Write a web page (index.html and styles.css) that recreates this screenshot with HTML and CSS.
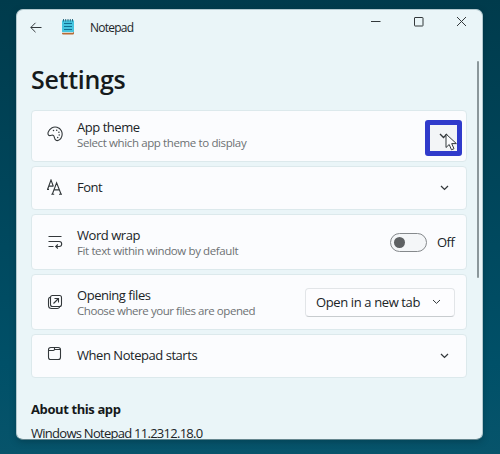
FILE: index.html
```html
<!DOCTYPE html>
<html lang="en">
<head>
<meta charset="utf-8">
<title>Notepad</title>
<link rel="stylesheet" href="styles.css">
</head>
<body>
<main class="window">
  <header class="titlebar">
    <svg class="back" width="12" height="12" viewBox="0 0 12 12"><path d="M11.500 5.500H.8M5.500.8.8 5.500l4.700 4.700"/></svg>
    <svg class="logo" width="12" height="16" viewBox="0 0 12 16">
      <rect x="0" y="13" width="12" height="2.400" rx=".8" fill="#b96b35"/>
      <rect x="0" y="1.300" width="12" height="12" rx=".8" fill="#45c4df"/>
      <path d="M0 13.500h11" stroke="#d8eef0" stroke-width=".8"/>
      <path d="M1.500 0v2.500M3.700 0v2.500M6 0v2.500M8.300 0v2.500M10.500 0v2.500" stroke="#176078" stroke-width=".9"/>
      <path d="M2 4.500h8M2 7.500h8M2 10.500h8" stroke="#116e92" stroke-width="1"/>
    </svg>
    <span class="app-name">Notepad</span>
    <div class="controls">
      <svg width="11" height="11" viewBox="0 0 11 11"><path d="M1 5.500h9.500"/></svg>
      <svg width="11" height="11" viewBox="0 0 11 11"><rect x="1.500" y="1.500" width="8.500" height="8.500" rx=".5"/></svg>
      <svg width="11" height="11" viewBox="0 0 11 11"><path d="m1 1 9 9M10 1l-9 9"/></svg>
    </div>
  </header>
  <section class="content">
    <h1>Settings</h1>
    <div class="cards">
      <div class="card theme">
        <svg class="icon" width="16" height="16" viewBox="0 0 16 16"><path d="M1.200 6.200C2.400 2.300 6.300.3 10 1.300c4 1.100 6 5 4.800 9-.8 2.800-3.200 4.800-5.300 4.200-1.800-.5-2-2.200-2.300-3.700-.3-1.400-1.100-1.900-2.300-1.600-1.100.3-2.300.8-3.200.1C.8 8.500.8 7.500 1.200 6.200Z"/><path class="dots" d="M6.500 4.500h.01M9.700 4.200h.01M11.900 6.300h.01M12.200 9h.01M10.700 11.500h.01"/></svg>
        <div class="text"><span class="name">App theme</span><span class="desc">Select which app theme to display</span></div>
        <div class="highlight"><svg width="9" height="6" viewBox="0 0 9 6"><path d="m1 1 3.500 3.400L8 1"/></svg></div>
        <svg class="cursor" width="13" height="19" viewBox="0 0 13 19"><path d="M1 1v13.500l3.200-3 2.300 5.300 2.500-1.100-2.300-5.100h4.700Z"/></svg>
      </div>
      <div class="card single">
        <svg class="icon" width="16" height="16" viewBox="0 0 16 16"><path d="M.6 10.300 4 1l2.400 6.500M1.800 7.100h4.100M0 10.400h2M5.400 15 9.600 3.700 14 15M7 10.900h5.300M4.300 15.200h2.900M12 15.200h3"/></svg>
        <div class="text"><span class="name">Font</span></div>
        <svg class="chevron" width="9" height="6" viewBox="0 0 9 6"><path d="m1 1 3.500 3.400L8 1"/></svg>
      </div>
      <div class="card">
        <svg class="icon wrap" width="16" height="16" viewBox="0 0 16 16"><path d="M1.500 2.500h13M1.500 7.500h10.700a2.500 2.500 0 0 1 0 5H9M1.500 12.500h5M10.900 10.500l-2.200 2 2.200 2"/></svg>
        <div class="text"><span class="name">Word wrap</span><span class="desc">Fit text within window by default</span></div>
        <div class="switch"></div><span class="off">Off</span>
      </div>
      <div class="card">
        <svg class="icon files" width="16" height="16" viewBox="0 0 16 16"><rect x="3.500" y="1.500" width="11" height="11" rx="2"/><path d="M3 3.200C2 3.700 1.500 4.300 1.500 5.300v5.900c0 2 1.100 3.300 3.200 3.300h5.500c1.200 0 2-.5 2.500-1.500M6.500 9.500l5-5M7.500 4.500h4v4"/></svg>
        <div class="text"><span class="name">Opening files</span><span class="desc choose">Choose where your files are opened</span></div>
        <div class="select"><span>Open in a new tab</span><svg width="9" height="6" viewBox="0 0 9 6"><path d="m1 1 3.500 3.400L8 1"/></svg></div>
      </div>
      <div class="card single">
        <svg class="icon start" width="16" height="16" viewBox="0 0 16 16"><rect x="1.500" y="1.500" width="12" height="12" rx="2.300"/><path d="M1.500 4.500h4.800q1.200 0 1.200-1.200V1.500M7.500 3.500h6"/></svg>
        <div class="text"><span class="name">When Notepad starts</span></div>
        <svg class="chevron" width="9" height="6" viewBox="0 0 9 6"><path d="m1 1 3.500 3.400L8 1"/></svg>
      </div>
    </div>
    <h2>About this app</h2>
    <p>Windows Notepad 11.2312.18.0</p>
  </section>
  <div class="scrollbar"></div>
</main>
</body>
</html>
```

FILE: styles.css
```css
* { box-sizing: border-box; }
body {
  margin: 0;
  width: 500px;
  height: 454px;
  padding: 9px 17px 14px 16px;
  overflow: hidden;
  background: linear-gradient(180deg, #003b4c 0%, #00455a 40%, #005068 80%, #07546b 100%);
  font-family: "Open Sans", "Noto Sans", sans-serif;
  color: #202427;
}
svg { fill: none; stroke: #33383b; stroke-width: 1; flex: none; display: block; }
span, h1, h2, p { white-space: nowrap; }
.window {
  position: relative;
  height: 431px;
  overflow: hidden;
  background: #eaf5f8;
  border: 1px solid #b2c8ce;
  border-bottom-color: #65868f;
  border-radius: 7px;
  box-shadow: 0 2px 6px #00283560;
}
.titlebar { height: 38px; display: flex; padding-left: 13px; }
.back { margin-top: 12px; }
.logo { margin: 9px 0 0 20px; stroke: none; }
.app-name { margin: 9px 0 0 16px; font-size: 12px; line-height: 17px; letter-spacing: -.75px; }
.controls { display: flex; gap: 32px; margin: 6px 15px 0 auto; }
.content { padding: 0 15px 0 14px; }
h1 { margin: 14px 0 0; font-size: 25px; line-height: 35px; font-weight: 600; letter-spacing: -.3px; color: #161a1c; }
.cards { display: flex; flex-direction: column; gap: 4px; margin-top: 13px; }
.card {
  position: relative;
  height: 56px;
  display: flex;
  align-items: center;
  padding: 0 11px 0 15px;
  background: #fbfcfe;
  border: 1px solid #dce9ec;
  border-radius: 4px;
}
.card.theme { height: 52px; padding-right: 4px; }
.card.single { height: 44px; }
.icon { margin-top: -3px; stroke-width: 1.100; }
.icon.wrap, .icon.files { margin-top: 0; }
.theme .icon { margin-top: -4px; }
.icon.start { margin-top: -4px; }
.dots { stroke-width: 1.500; stroke-linecap: round; }
.text { display: flex; flex-direction: column; margin: 0 auto 0 14px; }
.theme .text { margin-top: -4px; }
.single .text { margin-top: -2px; }
.name { font-size: 13px; line-height: 17px; letter-spacing: -.46px; }
.desc { font-size: 11.500px; line-height: 14px; letter-spacing: -.38px; color: #6d7173; }
.choose { letter-spacing: -.44px; }
.chevron { margin-right: 6px; stroke-width: 1.300; }
.highlight {
  display: flex;
  align-items: center;
  justify-content: center;
  width: 37px;
  height: 36px;
  margin-top: 4px;
  border: 5px solid #303bcb;
  border-radius: 3px;
  background: #f3f5f7;
}
.highlight svg { margin-top: -4px; stroke-width: 1.400; }
.cursor { position: absolute; left: 413px; top: 22px; fill: #fbfcfe; }
.switch { width: 37px; height: 19px; padding: 3px; border: 1px solid #85898c; border-radius: 10px; background: #f4f6f8; }
.switch::before { content: ""; display: block; width: 11px; height: 11px; border-radius: 50%; background: #5e6163; }
.off { width: 18px; margin-left: 10px; font-size: 13px; line-height: 18px; letter-spacing: -.5px; }
.select {
  display: flex;
  align-items: center;
  justify-content: space-between;
  width: 150px;
  height: 29px;
  padding: 0 13px 0 10px;
  border: 1px solid #e2e5e8;
  border-bottom-color: #c8cccf;
  border-radius: 4px;
  background: #fdfdff;
  font-size: 13px;
  letter-spacing: -.38px;
}
h2 { margin: 22px 0 0; font-size: 13px; line-height: 18px; font-weight: 700; letter-spacing: -.4px; color: #15191b; }
p { margin: 6px 0 0; font-size: 13px; line-height: 18px; letter-spacing: -.73px; }
.scrollbar { position: absolute; top: 51px; right: 3px; width: 2px; height: 217px; border-radius: 1px; background: #8b979b; }
```
